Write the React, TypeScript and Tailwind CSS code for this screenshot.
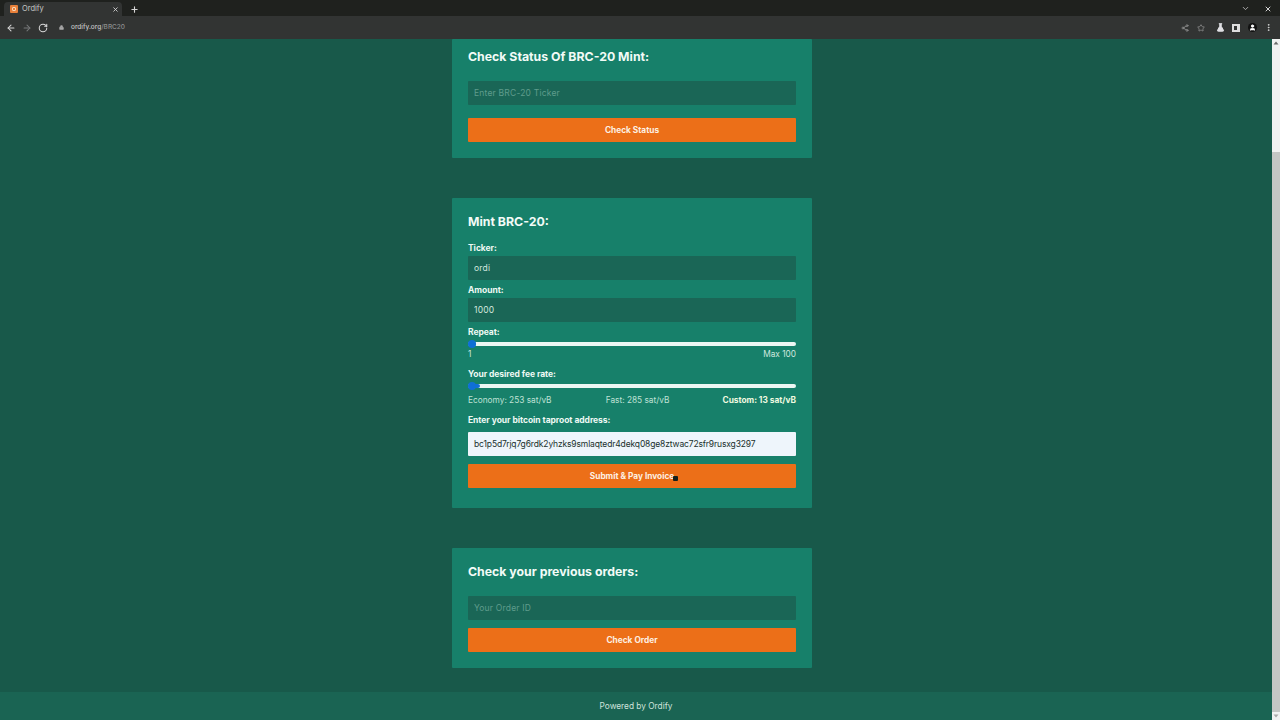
import { ArrowLeft, ArrowRight, RotateCw, Lock, Share2, Star, X, Plus, ChevronDown, FlaskConical, MoreVertical, User } from "lucide-react";

const font = { fontFamily: "Inter, 'Liberation Sans', sans-serif" };

function Field({ value, placeholder, light }: { value?: string; placeholder?: string; light?: boolean }) {
  return (
    <input
      readOnly
      value={value ?? ""}
      placeholder={placeholder}
      className={
        "block w-full h-6 px-1.5 rounded-[1px] text-[8.5px] outline-none placeholder:text-[#5f9c8c] " +
        (light ? "bg-[#eef5fb] text-[#20302c] tracking-[-0.14px]" : "bg-[#1a6656] text-[#d3e6df] tracking-[0.2px]")
      }
    />
  );
}

function OrangeButton({ label, cursor }: { label: string; cursor?: boolean }) {
  return (
    <button className="block relative w-full h-6 rounded-[1px] bg-[#ec6f18] text-[8.3px] font-bold text-[#fdf0e2]">
      {label}
      {cursor && <span className="absolute left-[205px] top-[12px] w-[5px] h-[5px] rounded-[1px] bg-[#14201c]" />}
    </button>
  );
}

function Label({ children, className = "" }: { children: string; className?: string }) {
  return <div className={"text-[8.5px] leading-3 font-bold tracking-[-0.05px] text-[#eef9f4] " + className}>{children}</div>;
}

function Slider({ fill }: { fill: number }) {
  return (
    <div className="relative h-1 rounded-full bg-[#ecf7f3]">
      <div className="absolute left-0 top-0 h-1 rounded-full bg-[#0f6fd6]" style={{ width: fill }} />
      <div className="absolute left-0 -top-0.5 w-2 h-2 rounded-full bg-[#0f6fd6]" />
    </div>
  );
}

function Card({ children, className = "" }: { children: React.ReactNode; className?: string }) {
  return <section className={"w-[360px] bg-[#17806a] px-4 rounded-[1px] " + className}>{children}</section>;
}

function Title({ children }: { children: string }) {
  return <h2 className="text-[12.3px] leading-5 font-bold text-[#f2fbf7]">{children}</h2>;
}

export default function App() {
  return (
    <div className="h-screen w-[1280px] flex flex-col overflow-hidden bg-[#18594a]" style={font}>
      <div className="h-4 shrink-0 bg-[#1f211e] flex items-end pl-1 pr-2 text-[#d5d5d5]">
        <div className="w-[118px] h-3.5 bg-[#323433] rounded-t-[4px] flex items-center pl-1.5 pr-[3px] gap-1">
          <span className="w-2 h-2 rounded-[1px] bg-[#e8803a] flex items-center justify-center">
            <span className="w-1 h-1 rounded-[1px] border border-[#f7d7b8]" />
          </span>
          <span className="text-[7.5px] text-[#c5c7c5] flex-1">Ordify</span>
          <X size={7} strokeWidth={3} />
        </div>
        <Plus size={9} strokeWidth={3} className="ml-2 mb-[2px]" />
        <div className="flex-1" />
        <ChevronDown size={9} strokeWidth={2.5} className="mb-[3px] text-[#b0b0b0]" />
        <X size={8} strokeWidth={3} className="ml-[14px] mb-[3px]" />
      </div>
      <div className="h-[23px] shrink-0 bg-[#323433] flex items-center pl-[6px] pr-[7px] text-[#d8d8d8]">
        <ArrowLeft size={10} strokeWidth={2.5} />
        <ArrowRight size={10} strokeWidth={2.5} className="ml-[6px] text-[#77797a]" />
        <RotateCw size={10} strokeWidth={2.5} className="ml-[6px]" />
        <Lock size={5} strokeWidth={3} fill="currentColor" className="ml-[11px] text-[#a8a8a8]" />
        <span className="ml-[7px] text-[6.5px] font-medium text-[#c4c4c4]">
          ordify.org<span className="text-[#8c8e8e]">/BRC20</span>
        </span>
        <div className="flex-1" />
        <Share2 size={8} strokeWidth={2} className="text-[#9c9c9c]" />
        <Star size={8} strokeWidth={2} className="ml-2 text-[#a0a0a0]" />
        <FlaskConical size={9} strokeWidth={2.5} fill="currentColor" className="ml-[11px] text-[#e0e0e4]" />
        <span className="ml-[7px] w-[8px] h-[8px] border-2 border-r-[3px] border-[#dedede] bg-[#323433]" />
        <span className="ml-[8px] w-[9px] h-[9px] rounded-full bg-[#111] flex items-center justify-center">
          <User size={7} strokeWidth={3} fill="currentColor" className="text-white" />
        </span>
        <MoreVertical size={9} strokeWidth={2.5} className="ml-[7px]" />
      </div>

      <div className="flex-1 min-h-0 flex">
        <div className="w-[1272px] flex flex-col">
          <main className="flex-1 min-h-0 pl-[452px] flex flex-col gap-10">
            <Card className="pt-2 h-[119px]">
              <Title>Check Status Of BRC-20 Mint:</Title>
              <div className="mt-[14px]"><Field placeholder="Enter BRC-20 Ticker" /></div>
              <div className="mt-[13px]"><OrangeButton label="Check Status" /></div>
            </Card>

            <Card className="pt-[14px] h-[310px]">
              <Title>Mint BRC-20:</Title>
              <Label className="mt-[10px] mb-[2px]">Ticker:</Label>
              <Field value="ordi" />
              <Label className="mt-1 mb-[2px]">Amount:</Label>
              <Field value="1000" />
              <Label className="mt-1 mb-[4px]">Repeat:</Label>
              <Slider fill={8} />
              <div className="mt-[2px] flex justify-between text-[8.3px] leading-3 text-[#cfe6de]">
                <span>1</span>
                <span>Max 100</span>
              </div>
              <Label className="mt-[8px] mb-[4px]">Your desired fee rate:</Label>
              <Slider fill={12} />
              <div className="mt-[6px] flex justify-between text-[8.3px] leading-3 text-[#bfe0d5]">
                <span>Economy: 253 sat/vB</span>
                <span className="ml-[1px]">Fast: 285 sat/vB</span>
                <span className="font-bold text-[#f0fae0]">Custom: 13 sat/vB</span>
              </div>
              <Label className="mt-[8px] mb-[6px]">Enter your bitcoin taproot address:</Label>
              <Field light value="bc1p5d7rjq7g6rdk2yhzks9smlaqtedr4dekq08ge8ztwac72sfr9rusxg3297" />
              <div className="mt-2"><OrangeButton label="Submit & Pay Invoice" cursor /></div>
            </Card>

            <Card className="pt-[14px] h-[120px]">
              <Title>Check your previous orders:</Title>
              <div className="mt-[14px]"><Field placeholder="Your Order ID" /></div>
              <div className="mt-2"><OrangeButton label="Check Order" /></div>
            </Card>
          </main>
          <footer className="h-7 shrink-0 bg-[#1a6453] flex items-center justify-center text-[8.3px] text-[#cfe3dc]">
            Powered by Ordify
          </footer>
        </div>
        <div className="w-2 bg-[#f1f1f1] flex flex-col items-center pt-[2px] pb-[2px]">
          <svg width="6" height="4" viewBox="0 0 6 4" className="shrink-0"><path d="M3 0.5 L5.5 3.5 H0.5 Z" fill="#6a6a6a" /></svg>
          <div className="w-full flex-1 mt-[107px] mb-[2px] bg-[#c4c6c4]" />
          <svg width="6" height="4" viewBox="0 0 6 4" className="shrink-0"><path d="M3 3.5 L5.5 0.5 H0.5 Z" fill="#a8a8a8" /></svg>
        </div>
      </div>
    </div>
  );
}
